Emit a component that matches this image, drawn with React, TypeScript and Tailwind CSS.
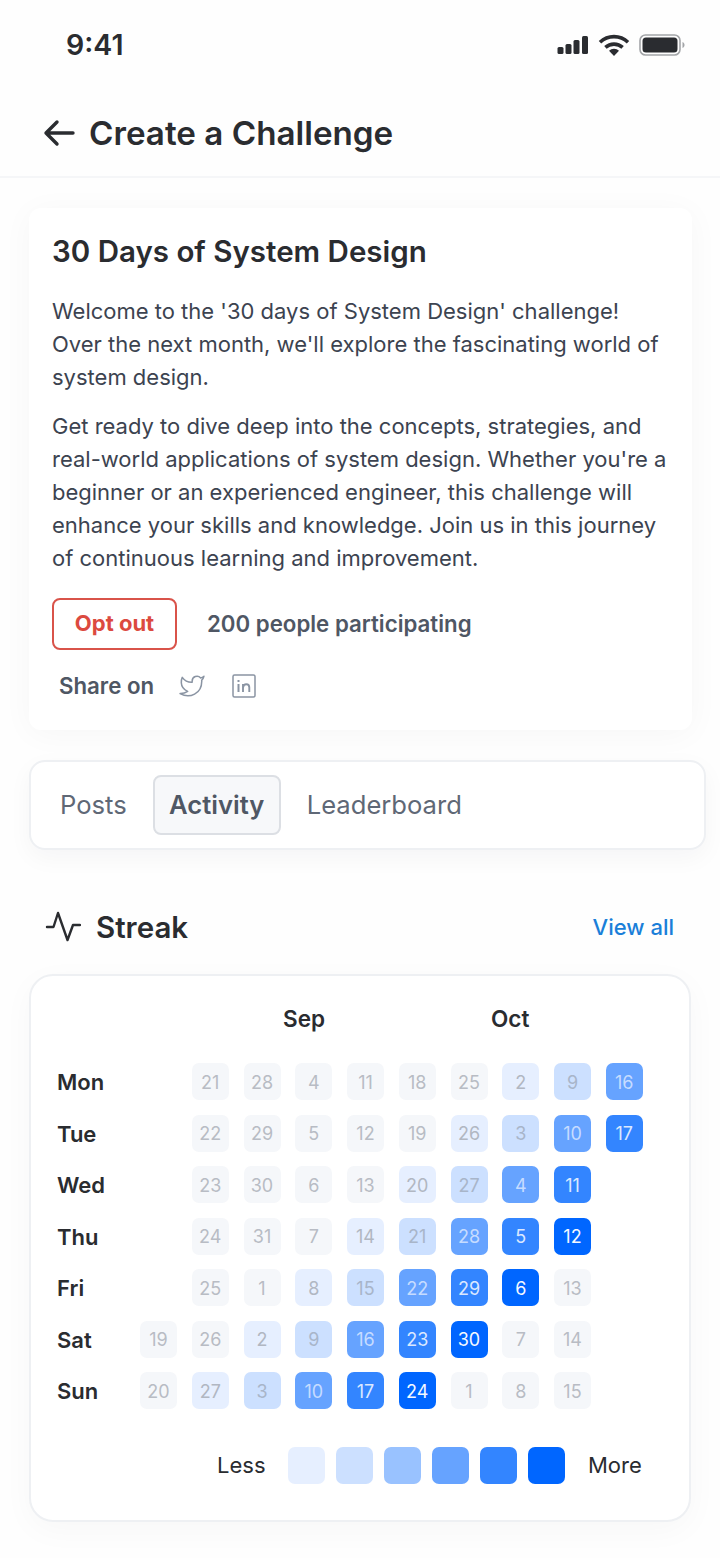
import React from "react";

type Cell = [number, number] | null;

const cellStyles: Record<number, string> = {
  0: "bg-[#f5f7fa] text-[#b8bcc4]",
  1: "bg-[#e6efff] text-[#b1b7c2]",
  2: "bg-[#cce0ff] text-[#a8b5c9]",
  4: "bg-[#66a3ff] text-[#c6dcff]",
  5: "bg-[#3385ff] text-[#dbe8ff]",
  6: "bg-[#0066ff] text-[#f4f8ff]",
};

const rows: { day: string; cells: Cell[] }[] = [
  { day: "Mon", cells: [null, [21, 0], [28, 0], [4, 0], [11, 0], [18, 0], [25, 0], [2, 1], [9, 2], [16, 4]] },
  { day: "Tue", cells: [null, [22, 0], [29, 0], [5, 0], [12, 0], [19, 0], [26, 1], [3, 2], [10, 4], [17, 5]] },
  { day: "Wed", cells: [null, [23, 0], [30, 0], [6, 0], [13, 0], [20, 1], [27, 2], [4, 4], [11, 5], null] },
  { day: "Thu", cells: [null, [24, 0], [31, 0], [7, 0], [14, 1], [21, 2], [28, 4], [5, 5], [12, 6], null] },
  { day: "Fri", cells: [null, [25, 0], [1, 0], [8, 1], [15, 2], [22, 4], [29, 5], [6, 6], [13, 0], null] },
  { day: "Sat", cells: [[19, 0], [26, 0], [2, 1], [9, 2], [16, 4], [23, 5], [30, 6], [7, 0], [14, 0], null] },
  { day: "Sun", cells: [[20, 0], [27, 1], [3, 2], [10, 4], [17, 5], [24, 6], [1, 0], [8, 0], [15, 0], null] },
];

const legend = ["bg-[#e6efff]", "bg-[#cce0ff]", "bg-[#99c2ff]", "bg-[#66a3ff]", "bg-[#3385ff]", "bg-[#0066ff]"];

function StatusIcons() {
  return (
    <div className="flex items-center gap-[9px]">
      <svg width="32" height="20" viewBox="0 0 32 20" fill="#2a2c30">
        <rect x="0.5" y="12" width="6" height="7" rx="1.5" />
        <rect x="8.5" y="9" width="6" height="10" rx="1.5" />
        <rect x="16.5" y="5" width="6" height="14" rx="1.5" />
        <rect x="25" y="1" width="6" height="18" rx="1.5" />
      </svg>
      <svg width="32" height="24" viewBox="0 0 32 24" fill="none" stroke="#2a2c30" strokeWidth="3.6" strokeLinecap="butt">
        <path d="M2 9.2a20.5 20.5 0 0 1 28 0" />
        <path d="M7.4 14.4a12.8 12.8 0 0 1 17.2 0" />
        <path d="M16 23l5-5.2a7 7 0 0 0-10 0z" fill="#2a2c30" stroke="none" />
      </svg>
      <svg width="46" height="22" viewBox="0 0 46 22" fill="none">
        <rect x="1" y="1" width="40" height="20" rx="5.5" stroke="#a3a5a8" strokeWidth="1.6" />
        <rect x="3.5" y="3.5" width="35" height="15" rx="3.5" fill="#2a2c30" />
        <path d="M43.5 8v6c1.4-.5 2-1.6 2-3s-.6-2.5-2-3z" fill="#a3a5a8" />
      </svg>
    </div>
  );
}

function TwitterIcon() {
  return (
    <svg width="28" height="26" viewBox="0 0 24 24" fill="none" stroke="#8a94a3" strokeWidth="1.4" strokeLinejoin="round">
      <path d="M23 3a10.9 10.9 0 0 1-3 1.53 4.48 4.48 0 0 0-7.86 3v1A10.66 10.66 0 0 1 3 4s-4 9 5 13a11.64 11.64 0 0 1-7 2c9 5 20 0 20-11.5a4.5 4.5 0 0 0-.08-.83A7.72 7.72 0 0 0 23 3z" />
    </svg>
  );
}

function LinkedinIcon() {
  return (
    <svg width="24" height="24" viewBox="0 0 24 24" fill="none" stroke="#8a94a3" strokeWidth="1.5">
      <rect x="1" y="1" width="22" height="22" rx="1.5" />
      <path d="M6.5 10v8" strokeWidth="2" />
      <path d="M6.5 6v2" strokeWidth="2" />
      <path d="M11 18v-8M11 13.5c.4-2.2 1.8-3.2 3.3-3.2 1.9 0 3 1.2 3 3.3V18" strokeWidth="1.9" />
    </svg>
  );
}

function PulseIcon() {
  return (
    <svg width="36" height="32" viewBox="0 0 36 32" fill="none" stroke="#2a2c30" strokeWidth="2.4" strokeLinecap="round" strokeLinejoin="round">
      <path d="M2 16h6.5L13 2l9.5 27 5.5-15h7" />
    </svg>
  );
}

export default function App() {
  return (
    <div
      className="w-[720px] h-[1558px] overflow-hidden bg-[#fefefe] text-[#2a2c30]"
      style={{ fontFamily: "Inter, 'Noto Sans', sans-serif" }}
    >
      {/* status bar */}
      <div className="h-[88px] flex items-center justify-between pl-[66px] pr-[35px] pt-[2px]">
        <span className="text-[28.5px] leading-[36px] font-semibold">9:41</span>
        <StatusIcons />
      </div>

      {/* title bar */}
      <div className="h-[90px] flex items-center pl-[43px] gap-[13px] border-b-2 border-[#f5f6f8] pt-[1px]">
        <svg width="33" height="28" viewBox="0 0 33 28" fill="none" stroke="#2a2c30" strokeWidth="3.4" strokeLinecap="round" strokeLinejoin="round">
          <path d="M30 14H3M14 3 3 14 14 25" />
        </svg>
        <h1 className="text-[33.2px] leading-[40px] font-semibold">Create a Challenge</h1>
      </div>

      <div className="pl-[29px]">
        {/* challenge summary */}
        <section className="mt-[30px] w-[663px] h-[522px] rounded-[12px] bg-white px-[23px] pt-[25px] shadow-[0_4px_32px_rgba(17,24,39,0.035)]">
          <h2 className="text-[29.5px] leading-[36px] font-semibold">30 Days of System Design</h2>
          <p className="mt-[26px] text-[22px] leading-[33px] text-[#3c4350]">
            Welcome to the '30 days of System Design' challenge! Over the next month, we'll explore the fascinating world of system design.
          </p>
          <p className="mt-[15.5px] text-[22px] leading-[33px] text-[#3c4350]">
            Get ready to dive deep into the concepts, strategies, and real-world applications of system design. Whether you're a beginner or an experienced engineer, this challenge will enhance your skills and knowledge. Join us in this journey of continuous learning and improvement.
          </p>
          <div className="mt-[23px] flex items-center gap-[30px]">
            <button className="w-[125px] h-[52px] rounded-[8px] border-2 border-[#d9534a] text-[22px] font-bold text-[#dc4a3f]">
              Opt out
            </button>
            <span className="text-[22.25px] font-semibold text-[#4f5764]">200 people participating</span>
          </div>
          <div className="mt-[22px] pl-[7px] h-[28px] flex items-center">
            <span className="text-[22.25px] font-semibold text-[#4f5764]">Share on</span>
            <span className="ml-[24px]"><TwitterIcon /></span>
            <span className="ml-[26px]"><LinkedinIcon /></span>
          </div>
        </section>

        {/* section tabs */}
        <nav className="mt-[30px] w-[677px] h-[90px] rounded-[16px] border-2 border-[#eef0f3] bg-white flex items-center pl-[29px] shadow-[0_8px_24px_rgba(17,24,39,0.04)]">
          <span className="text-[25.6px] text-[#5f6876]">Posts</span>
          <span className="ml-[26px] w-[128px] h-[60px] rounded-[8px] border-2 border-[#dcdfe4] bg-[#f7f8fa] flex items-center justify-center text-[25.6px] font-semibold text-[#4f5764]">
            Activity
          </span>
          <span className="ml-[26px] text-[25.6px] text-[#5f6876]">Leaderboard</span>
        </nav>

        {/* streak heading */}
        <div className="mt-[59px] w-[645px] h-[36px] flex items-center justify-between pl-[16px]">
          <div className="flex items-center gap-[15px]">
            <PulseIcon />
            <h3 className="text-[29.5px] font-semibold">Streak</h3>
          </div>
          <a className="text-[22px] font-medium text-[#1a7fd9]">View all</a>
        </div>

        {/* contribution calendar */}
        <section className="mt-[29px] w-[662px] h-[548px] rounded-[24px] border-2 border-[#eef0f3] bg-white pl-[26px] pt-[29px] shadow-[0_8px_32px_rgba(17,24,39,0.03)]">
          <div className="h-[28px] flex items-center pl-[226px] text-[22.5px] font-semibold">
            <span className="w-[208px]">Sep</span>
            <span>Oct</span>
          </div>
          <div className="mt-[30px] grid grid-cols-[68.25px_repeat(10,37px)] gap-x-[14.75px] gap-y-[14.5px] items-center">
            {rows.map((row) => (
              <React.Fragment key={row.day}>
                <span className="h-[37px] text-[22px] leading-[37px] font-semibold pt-[1px]">{row.day}</span>
                {row.cells.map((cell, i) =>
                  cell ? (
                    <div
                      key={i}
                      className={`h-[37px] w-[37px] rounded-[7px] flex items-center justify-center pt-[1px] text-[18px] ${cellStyles[cell[1]]}`}
                    >
                      {cell[0]}
                    </div>
                  ) : (
                    <div key={i} className="h-[37px] w-[37px]" />
                  )
                )}
              </React.Fragment>
            ))}
          </div>
          <div className="mt-[38px] flex items-center pl-[160px]">
            <span className="text-[22px] w-[71px]">Less</span>
            <div className="flex gap-[11px]">
              {legend.map((bg) => (
                <div key={bg} className={`h-[37px] w-[37px] rounded-[7px] ${bg}`} />
              ))}
            </div>
            <span className="ml-[23px] text-[22px]">More</span>
          </div>
        </section>
      </div>
    </div>
  );
}
